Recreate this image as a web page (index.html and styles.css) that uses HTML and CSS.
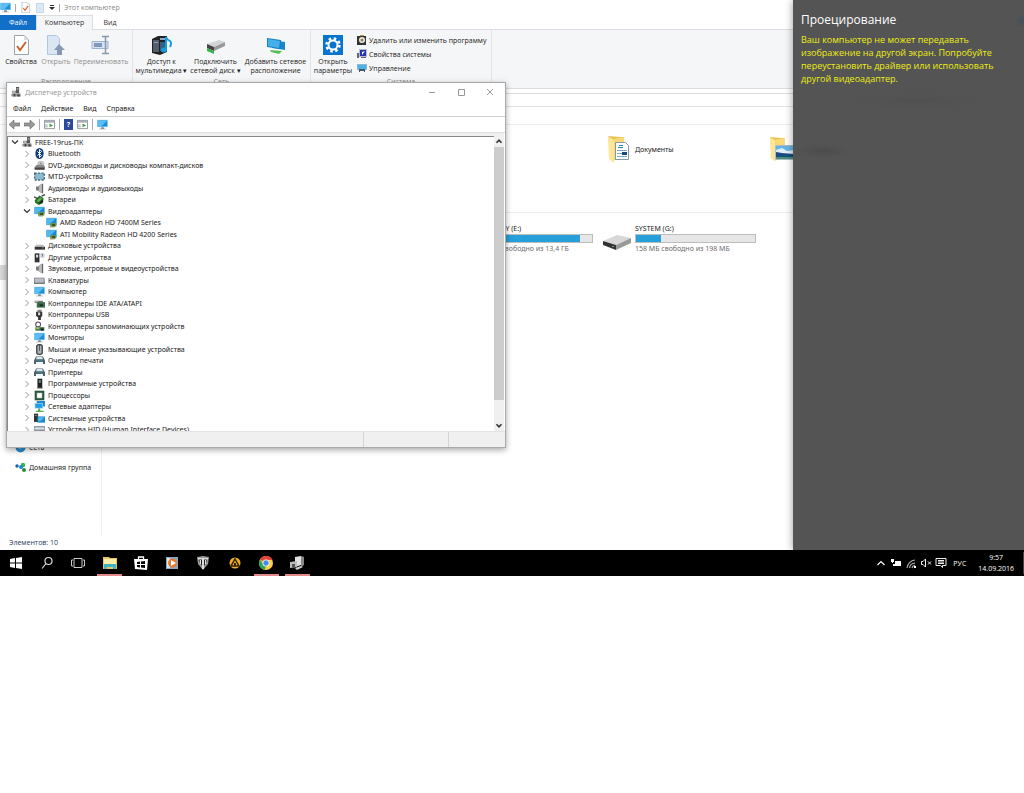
FILE: index.html
```html
<!DOCTYPE html>
<html lang="ru">
<head>
<meta charset="utf-8">
<title>Диспетчер устройств</title>
<link rel="stylesheet" href="styles.css">
</head>
<body>
<svg class="defs" aria-hidden="true">
  <defs>
    <symbol id="monitor" viewBox="0 0 16 16"><path fill="#b9dcf0" d="M0 1h16v11H0z"/><path fill="#1b8fdc" d="M1 2h14v9H1z"/><path fill="#5bbdf3" d="M1 2h14L6 11H1z"/><path fill="#7d8c97" d="M6 12h4v2h3v1H3v-1h3z"/></symbol>
    <symbol id="pc" viewBox="0 0 16 16"><path fill="#555" d="M8 0h5v10H8z"/><path fill="#bbb" d="M9 2h3v1H9zM9 4h3v1H9z"/><path fill="#777" d="M2 6h6v4H2z"/><path fill="#cfd8dd" d="M3 7h4v2H3z"/><path fill="#999" d="M0 12l3-2h12l1 5H1z"/><path fill="#444" d="M4 11h3v4H4zM10 12h4v3h-4z"/></symbol>
    <symbol id="bluetooth" viewBox="0 0 16 16"><ellipse cx="8" cy="8" rx="6" ry="8" fill="#0a3a78"/><path d="M5 5l6 6-3 3V2l3 3-6 6" fill="none" stroke="#fff" stroke-width="1.4"/></symbol>
    <symbol id="dvd" viewBox="0 0 16 16"><ellipse cx="10" cy="5" rx="5" ry="4" fill="#c4c7c9"/><path fill="#888" d="M1 10l3-3h10l2 3v4H1z"/><path fill="#444" d="M1 11h14v3H1z"/><circle cx="10" cy="5" r="1" fill="#777"/></symbol>
    <symbol id="mtd" viewBox="0 0 16 16"><path fill="#8dbad0" d="M1 3h14v10H1z"/><path d="M1 3h14v10H1z" fill="none" stroke="#3f6878" stroke-width="2" stroke-dasharray="3 2"/></symbol>
    <symbol id="speaker" viewBox="0 0 16 16"><path fill="#777" d="M3 5h3l5-4v14l-5-4H3z"/><path fill="#bbb" d="M7 5l4-4v14l-4-4z"/><path d="M12.500 1v14" stroke="#555" stroke-width="1.500"/></symbol>
    <symbol id="battery" viewBox="0 0 16 16"><path fill="#256f2b" d="M1 9l7-7 6 4-1 7-6 3-5-3z"/><path fill="#63b44c" d="M4 9l5-4 3 2-6 5z"/><path d="M0 4l6 3M11 3l5-2" stroke="#444" stroke-width="2"/><path fill="#222" d="M8 12l5-4v4l-5 3z"/></symbol>
    <symbol id="display" viewBox="0 0 16 16"><path fill="#a4cfe3" d="M0 1h16v11H0z"/><path fill="#168ad2" d="M1 2h14v9H1z"/><path fill="#50b8ee" d="M1 2h13L5 11H1z"/><path fill="#6f973d" d="M6 9h9v5H6z"/><path fill="#3d4b38" d="M9 10h4v3H9zM6 14h7v1H6z"/></symbol>
    <symbol id="disk" viewBox="0 0 16 16"><path fill="#bbb" d="M3 7h10l3 3H1z"/><path fill="#333" d="M1 10h15v4H1z"/><path fill="#8c9" d="M12 11h2v1h-2z"/></symbol>
    <symbol id="unknown" viewBox="0 0 16 16"><path fill="#333" d="M1 2h7v13H1z"/><path fill="#ddd" d="M3 4h3v4H3z"/><circle cx="12" cy="5" r="4" fill="#d8dfe3"/><path d="M11 4q0-1 1-1 2 1 0 3v1" fill="none" stroke="#557" stroke-width="1"/></symbol>
    <symbol id="keyboard" viewBox="0 0 16 16"><path fill="#777" d="M0 4h15l1 9H0z"/><path fill="#c4c9d0" d="M1 5h13v6H1z"/><path d="M1 7.500h13M1 9.500h13" stroke="#9aa0a8" stroke-dasharray="2 1"/></symbol>
    <symbol id="ide" viewBox="0 0 16 16"><path fill="#777" d="M1 4h12v3H1z"/><path fill="#3c6a4a" d="M4 6h12v8H4z"/><path fill="#1d3025" d="M8 9h5v3H8z"/><path fill="#bbb" d="M2 4h4v2H2z"/></symbol>
    <symbol id="usb" viewBox="0 0 16 16"><path fill="#888" d="M5 1h6v4H5z"/><path fill="#333" d="M3 4h9v6l-2 2v4H6v-4l-3-2z"/><path fill="#ddd" d="M6 5h3v4H6z"/></symbol>
    <symbol id="storage" viewBox="0 0 16 16"><circle cx="6" cy="5" r="3.500" fill="none" stroke="#546" stroke-width="1.500"/><path fill="#346a4d" d="M2 9h13v5H2z"/><path fill="#9bc15b" d="M3 9h5v3H3z"/><path fill="#222" d="M10 11h4v3h-4z"/></symbol>
    <symbol id="mouse" viewBox="0 0 16 16"><rect x="3" y="0" width="10" height="16" rx="4" fill="#444"/><rect x="5" y="2" width="6" height="12" rx="2" fill="#a7b4bb"/><path d="M8 2v8" stroke="#333"/></symbol>
    <symbol id="printer" viewBox="0 0 16 16"><path fill="#50606a" d="M3 2h10l3 6v5h-3v-3H3v3H0V8z"/><path fill="#d6e7ef" d="M4 3h8l1 3H3z"/><path fill="#379bb3" d="M4 8h8v1H4z"/><path fill="#eef5f7" d="M4 11h8v2H4z"/></symbol>
    <symbol id="software" viewBox="0 0 16 16"><path fill="#222" d="M5 1h7v14H5z"/><path fill="#6c8b70" d="M7 3h3v4H7z"/><path fill="#777" d="M4 14h9v1H4z"/></symbol>
    <symbol id="cpu" viewBox="0 0 16 16"><path fill="#28553c" d="M1 1h14v14H1z"/><path fill="#c4d5c5" d="M4 4h8v8H4z"/><path fill="#fff" d="M5 5h6v6H5z"/></symbol>
    <symbol id="net" viewBox="0 0 16 16"><path fill="#2588cc" d="M4 0h12v8H4z"/><path fill="#8ed3f7" d="M1 3h12v8H1z"/><path fill="#259ce4" d="M2 4h10v6H2z"/><path fill="#51a94b" d="M6 11h3v3h5v2H3v-2h3z"/></symbol>
    <symbol id="system" viewBox="0 0 16 16"><path fill="#333" d="M0 1h6v12H0z"/><path fill="#999" d="M1 3h4v1H1z"/><path fill="#168ad2" d="M5 5h11v9H5z"/><path fill="#55b8e9" d="M6 6h9l-6 6H6z"/></symbol>
    <symbol id="hid" viewBox="0 0 16 16"><path fill="#8798a4" d="M0 3h16v10H0z"/><path fill="#d8e2e8" d="M1 5h14v3H1z"/><path fill="#b77" d="M9 9h5v3H9z"/></symbol>
    <symbol id="chevron" viewBox="0 0 8 8"><path d="M2.500 1l3 3-3 3" fill="none" stroke="#999"/></symbol>
    <symbol id="open" viewBox="0 0 8 8"><path d="M1 2.500l3 3 3-3" fill="none" stroke="#333" stroke-width="1.200"/></symbol>
    <symbol id="up" viewBox="0 0 8 8"><path d="M2 5l2-2 2 2" fill="none" stroke="#333" stroke-width="1.300"/></symbol>
    <symbol id="down" viewBox="0 0 8 8"><path d="M2 3l2 2 2-2" fill="none" stroke="#333" stroke-width="1.300"/></symbol>
    <symbol id="sheet" viewBox="0 0 16 20"><path fill="#fff" stroke="#9aa4ad" d="M1.500.5h10l4 4v15h-14z"/><path fill="#ddd" d="M11 0v5h5z"/><path d="M4 11l3 4 6-8" fill="none" stroke="#d0622c" stroke-width="2"/></symbol>
    <symbol id="blanksheet" viewBox="0 0 20 20"><path fill="#dbe6f4" stroke="#b2c5dd" d="M1.500.5h9l3 3v16h-12z"/><path fill="#8798b2" d="M13 9l6 6h-3v5h-5v-5H8z"/></symbol>
    <symbol id="panelicon" viewBox="0 0 12 10"><path fill="#fff" stroke="#8a9299" d="M.5.5h11v9H.5z"/><path fill="#a8b0b6" d="M1 1h10v2H1z"/><path fill="#9aa" d="M1 5h3v1H1zM1 7h3v1H1z"/><path fill="#4a9b4c" d="M6 4l4 2-4 2z"/></symbol>
    <symbol id="folder" viewBox="0 0 24 28"><path fill="#e9c35a" d="M1 1l13 1h3v23H5z"/><path fill="#ffe596" d="M1 1l6 4v23l-5-4z"/><path fill="#fad978" d="M7 4l10-2v22H7z"/></symbol>
    <symbol id="drive" viewBox="0 0 28 16"><path fill="#d8d8d8" d="M0 7L14 1l14 3-15 7z"/><path fill="#333" d="M0 7l13 4v5L0 11z"/><path fill="#999" d="M13 11l15-7v5l-15 7z"/><path fill="#6a6" d="M9 12h2v1H9z"/></symbol>
  </defs>
</svg>

<main class="desktop">
  <div class="workspace">
    <section class="explorer" aria-label="Этот компьютер">
      <header class="ex-title">
        <svg class="i11"><use href="#monitor"/></svg><i class="bar"></i>
        <svg class="i11"><use href="#sheet"/></svg>
        <svg class="i10" viewBox="0 0 10 10"><path fill="#dce8f6" stroke="#c5d6ea" d="M1.500.5h7v9h-7z"/></svg>
        <svg class="i6" viewBox="0 0 6 6"><path fill="#333" d="M1 0h4v1H1zM0 2h6L3 5z"/></svg><i class="bar"></i>
        <span>Этот компьютер</span>
      </header>
      <nav class="tabs">
        <button class="tab file">Файл</button><button class="tab current">Компьютер</button><button class="tab">Вид</button>
      </nav>
      <div class="ribbon">
        <div class="group g-place">
          <div class="tools">
            <button class="tool w38"><svg class="i20"><use href="#sheet"/></svg><span>Свойства</span></button>
            <button class="tool w30 off"><svg class="i20"><use href="#blanksheet"/></svg><span>Открыть</span></button>
            <button class="tool w58 off"><svg class="i20" viewBox="0 0 20 20"><path fill="#d5e2f2" stroke="#9fb4d0" d="M1 6.500h16v7H1z"/><path fill="#8299bd" d="M3 8h8v4H3z"/><path d="M11 1.500h3.500v17H11M18 1.500h-3.500v17H18" fill="none" stroke="#8797ad" stroke-width="1.500"/></svg><span>Переименовать</span></button>
          </div>
          <span class="caption">Расположение</span>
        </div>
        <div class="group g-net">
          <div class="tools">
            <button class="tool w54"><svg class="i20" viewBox="0 0 20 20"><path fill="#222" d="M0 4l6-3h9v16l-7 3-8-2z"/><path fill="#53606b" d="M1 5h6v12H1z"/><path fill="#8ca9bb" d="M8 3h5v2H8zM2 7h4v1H2z"/><path fill="#345f80" d="M8 7h5v9H8z"/><path d="M14 15V2q1 3 4 4 2 2 0 6" fill="none" stroke="#169bdf" stroke-width="2"/><ellipse cx="12" cy="15" rx="3" ry="2.500" fill="#169bdf"/></svg><span>Доступ к<br>мультимедиа ▾</span></button>
            <button class="tool w50"><svg class="i20" viewBox="0 0 20 20"><path fill="#d2d5d6" d="M1 9l12-4 6 2-11 5z"/><path fill="#444" d="M1 9l7 3v4l-7-3z"/><path fill="#999" d="M8 12l11-5v4L8 16z"/><path fill="#36b449" d="M1 13l7 3v3l-7-3z"/></svg><span>Подключить<br>сетевой диск ▾</span></button>
            <button class="tool w66"><svg class="i20" viewBox="0 0 20 20"><path fill="#1a86c9" d="M6 5l13 2v8L6 13z"/><path fill="#1782c5" d="M1 3l14 2v9L1 12z"/><path fill="#45afea" d="M2 4l12 2-1 7-11-2z"/><path fill="#55bf56" d="M4 15l12 1-3 3-8-2z"/></svg><span>Добавить сетевое<br>расположение</span></button>
          </div>
          <span class="caption">Сеть</span>
        </div>
        <div class="group g-sys">
          <div class="tools">
            <button class="tool w38"><svg class="i20" viewBox="0 0 20 20"><path fill="#0874ce" d="M0 0h20v20H0z"/><circle cx="10" cy="10" r="4.500" fill="none" stroke="#fff" stroke-width="2"/><circle cx="10" cy="10" r="6.500" fill="none" stroke="#fff" stroke-width="2.500" stroke-dasharray="2.550 2.550"/></svg><span>Открыть<br>параметры</span></button>
            <div class="links">
              <button class="link"><svg class="i10" viewBox="0 0 10 10"><path fill="#333" d="M0 1h9v9H0z"/><path fill="#b9974d" d="M3 0h4v1H3z"/><circle cx="5" cy="5" r="3" fill="#eee"/><circle cx="5" cy="5" r="1.500" fill="#947a42"/></svg>Удалить или изменить программу</button>
              <button class="link"><svg class="i10" viewBox="0 0 10 10"><path fill="#b7bdd2" d="M2 0h8v8H2z"/><path fill="#2534ad" d="M3 1h6v6H3z"/><path fill="#fff" d="M5 3l3-1-3 4z"/><path fill="#667" d="M0 4h2v5H0zM4 8h5v1H4z"/></svg>Свойства системы</button>
              <button class="link"><svg class="i10" viewBox="0 0 10 10"><path fill="#8db9d0" d="M0 1h10v6H0z"/><path fill="#48b1e8" d="M1 2h8v4H1z"/><path fill="#456" d="M2 6h6v3H7V8H3v1H2z"/></svg>Управление</button>
            </div>
          </div>
          <span class="caption">Система</span>
        </div>
      </div>
      <div class="crumbs"></div>
      <div class="address"></div>
      <div class="headings"></div>
      <div class="ex-body">
        <nav class="side">
          <a class="place" href="#"><svg class="i11" viewBox="0 0 11 11"><circle cx="5.500" cy="5.500" r="5" fill="#2b8cd0"/><path fill="#a5d7ef" d="M1 4l5-3 3 3-4 3z"/></svg>Сеть</a>
          <a class="place" href="#"><svg class="i11" viewBox="0 0 11 11"><circle cx="2" cy="4" r="1.700" fill="#185fb4"/><circle cx="8" cy="3" r="2.200" fill="#38b44a"/><circle cx="6" cy="5" r="2" fill="#168ad2"/><circle cx="9" cy="8" r="2" fill="#238c3e"/></svg>Домашняя группа</a>
        </nav>
        <div class="content">
          <div class="tiles folders">
            <div class="tile c3"><svg class="thumb" viewBox="-4 0 28 28"><use href="#folder" width="24" height="28"/><path fill="#fff" stroke="#8799a5" d="M8.500 7.500h10l3 3v14h-13z"/><path fill="#258bbb" d="M12 10h4v1h-4zM11 12h5v1h-5z"/><path stroke="#7aacca" d="M10 15.500h10M10 18.500h5M10 21.500h10"/><path fill="#174b75" d="M15 17h5v3h-5z"/></svg><span>Документы</span></div>
            <div class="tile c4"><svg class="thumb" viewBox="0 0 28 28"><use href="#folder" x="3" width="22" height="28"/><path fill="#eef" stroke="#abc" d="M9.500 10.500h19v14h-19z"/><path fill="#64b5e6" d="M10 11h18v6H10z"/><path fill="#dceefa" d="M10 15l6-2 5 3 7-1v2H10z"/><path fill="#174f80" d="M10 17l6 1 12 1v3H10z"/><path fill="#4b8e79" d="M10 22h18v2H10z"/></svg></div>
          </div>
          <div class="tiles drives">
            <div class="tile c2"><svg class="thumb"><use href="#drive" y="2"/></svg><div class="info"><span>DISCOVERY (E:)</span><div class="usage"><div class="used" style="width:90%"></div></div><span class="free">11,37 ГБ свободно из 13,4 ГБ</span></div></div>
            <div class="tile c3"><svg class="thumb"><use href="#drive" y="4"/></svg><div class="info"><span>SYSTEM (G:)</span><div class="usage"><div class="used" style="width:21%"></div></div><span class="free">158 МБ свободно из 198 МБ</span></div></div>
          </div>
        </div>
      </div>
      <footer class="count">Элементов: 10</footer>
    </section>

    <section class="dialog" aria-label="Диспетчер устройств">
      <header class="dlg-title">
        <svg class="i10"><use href="#pc"/></svg><h1>Диспетчер устройств</h1>
        <button class="win" aria-label="Свернуть"><svg viewBox="0 0 8 8"><path d="M1 4.500h6" stroke="#999"/></svg></button>
        <button class="win" aria-label="Развернуть"><svg viewBox="0 0 8 8"><path d="M1.500 1.500h6v6h-6z" fill="none" stroke="#999"/></svg></button>
        <button class="win" aria-label="Закрыть"><svg viewBox="0 0 8 8"><path d="M1 1l6 6M7 1L1 7" stroke="#999"/></svg></button>
      </header>
      <nav class="menu"><button>Файл</button><button>Действие</button><button>Вид</button><button>Справка</button></nav>
      <div class="toolbar">
        <button aria-label="Назад"><svg class="i11" viewBox="0 0 11 11"><path fill="#999" stroke="#666" stroke-width=".6" d="M0 5.500L5 1v3h6v3H5v3z"/></svg></button>
        <button aria-label="Вперёд"><svg class="i11" viewBox="0 0 11 11"><path fill="#999" stroke="#666" stroke-width=".6" d="M11 5.500L6 1v3H0v3h6v3z"/></svg></button>
        <i class="rule"></i>
        <button aria-label="Дерево консоли"><svg class="i11"><use href="#panelicon"/></svg></button>
        <i class="rule"></i>
        <button class="help" aria-label="Справка">?</button>
        <button aria-label="Область действий"><svg class="i11"><use href="#panelicon"/></svg></button>
        <i class="rule"></i>
        <button aria-label="Обновить конфигурацию"><svg class="i11"><use href="#monitor"/></svg></button>
      </div>
      <div class="tree-pane">
        <ul class="tree">
          <li class="root"><svg class="tw"><use href="#open"/></svg><svg class="ic"><use href="#pc"/></svg>FREE-19rus-ПК</li>
          <li><svg class="tw"><use href="#chevron"/></svg><svg class="ic"><use href="#bluetooth"/></svg>Bluetooth</li>
          <li><svg class="tw"><use href="#chevron"/></svg><svg class="ic"><use href="#dvd"/></svg>DVD-дисководы и дисководы компакт-дисков</li>
          <li><svg class="tw"><use href="#chevron"/></svg><svg class="ic"><use href="#mtd"/></svg>MTD-устройства</li>
          <li><svg class="tw"><use href="#chevron"/></svg><svg class="ic"><use href="#speaker"/></svg>Аудиовходы и аудиовыходы</li>
          <li><svg class="tw"><use href="#chevron"/></svg><svg class="ic"><use href="#battery"/></svg>Батареи</li>
          <li><svg class="tw"><use href="#open"/></svg><svg class="ic"><use href="#display"/></svg>Видеоадаптеры</li>
          <li class="leaf"><svg class="ic"><use href="#display"/></svg>AMD Radeon HD 7400M Series</li>
          <li class="leaf"><svg class="ic"><use href="#display"/></svg>ATI Mobility Radeon HD 4200 Series</li>
          <li><svg class="tw"><use href="#chevron"/></svg><svg class="ic"><use href="#disk"/></svg>Дисковые устройства</li>
          <li><svg class="tw"><use href="#chevron"/></svg><svg class="ic"><use href="#unknown"/></svg>Другие устройства</li>
          <li><svg class="tw"><use href="#chevron"/></svg><svg class="ic"><use href="#speaker"/></svg>Звуковые, игровые и видеоустройства</li>
          <li><svg class="tw"><use href="#chevron"/></svg><svg class="ic"><use href="#keyboard"/></svg>Клавиатуры</li>
          <li><svg class="tw"><use href="#chevron"/></svg><svg class="ic"><use href="#monitor"/></svg>Компьютер</li>
          <li><svg class="tw"><use href="#chevron"/></svg><svg class="ic"><use href="#ide"/></svg>Контроллеры IDE ATA/ATAPI</li>
          <li><svg class="tw"><use href="#chevron"/></svg><svg class="ic"><use href="#usb"/></svg>Контроллеры USB</li>
          <li><svg class="tw"><use href="#chevron"/></svg><svg class="ic"><use href="#storage"/></svg>Контроллеры запоминающих устройств</li>
          <li><svg class="tw"><use href="#chevron"/></svg><svg class="ic"><use href="#monitor"/></svg>Мониторы</li>
          <li><svg class="tw"><use href="#chevron"/></svg><svg class="ic"><use href="#mouse"/></svg>Мыши и иные указывающие устройства</li>
          <li><svg class="tw"><use href="#chevron"/></svg><svg class="ic"><use href="#printer"/></svg>Очереди печати</li>
          <li><svg class="tw"><use href="#chevron"/></svg><svg class="ic"><use href="#printer"/></svg>Принтеры</li>
          <li><svg class="tw"><use href="#chevron"/></svg><svg class="ic"><use href="#software"/></svg>Программные устройства</li>
          <li><svg class="tw"><use href="#chevron"/></svg><svg class="ic"><use href="#cpu"/></svg>Процессоры</li>
          <li><svg class="tw"><use href="#chevron"/></svg><svg class="ic"><use href="#net"/></svg>Сетевые адаптеры</li>
          <li><svg class="tw"><use href="#chevron"/></svg><svg class="ic"><use href="#system"/></svg>Системные устройства</li>
          <li><svg class="tw"><use href="#chevron"/></svg><svg class="ic"><use href="#hid"/></svg>Устройства HID (Human Interface Devices)</li>
        </ul>
        <div class="scroll"><svg class="arrow"><use href="#up"/></svg><div class="thumbbar"></div><svg class="arrow"><use href="#down"/></svg></div>
      </div>
      <footer class="status"><span></span><span></span><span></span></footer>
    </section>

    <aside class="project">
      <h2>Проецирование</h2>
      <p>Ваш компьютер не может передавать изображение на другой экран. Попробуйте переустановить драйвер или использовать другой видеоадаптер.</p>
    </aside>
  </div>

  <footer class="taskbar">
    <div class="apps">
      <button aria-label="Пуск"><svg viewBox="0 0 16 16"><path fill="#fff" d="M2 4l5-1v4.500H2zM8 3l6-1v5.500H8zM2 8.500h5V13l-5-1zM8 8.500h6V14l-6-1z"/></svg></button>
      <button aria-label="Поиск"><svg viewBox="0 0 16 16"><circle cx="9.500" cy="6" r="3.500" fill="none" stroke="#ddd" stroke-width="1.200"/><path d="M7 8.500l-4 5" stroke="#ddd" stroke-width="1.200"/></svg></button>
      <button aria-label="Представление задач"><svg viewBox="0 0 16 16"><path d="M4 3.500h8v9H4zM3 5H1.500v6H3M13 5h1.500v6H13" fill="none" stroke="#ccc"/></svg></button>
      <button class="live" aria-label="Проводник"><svg viewBox="0 0 16 16"><path fill="#e9c55b" d="M1 2h6l1 1h7v11H1z"/><path fill="#fff0a8" d="M2 4h12v6H2z"/><path fill="#42b5c5" d="M2 9h12v5h-3v-2H5v2H2z"/></svg></button>
      <button aria-label="Магазин"><svg viewBox="0 0 16 16"><path d="M5.500 5V2h5v3" fill="none" stroke="#fff" stroke-width="1.300"/><path fill="#fff" d="M1 4h14l-1 11-12-1z"/><path fill="#000" d="M4 7l3-.5V9H4zM8 6.500l4-.5v3H8zM4 10h3v2.500L4 12zM8 10h4v3l-4-.5z"/></svg></button>
      <button aria-label="Проигрыватель"><svg viewBox="0 0 16 16"><path fill="#8ba9be" d="M2 2h12v12H2z"/><path fill="#d8e5ed" d="M3 3h3v10H3z"/><circle cx="8.500" cy="8" r="4.500" fill="#e77a2e"/><path fill="#fff" d="M7 5l5 3-5 3z"/></svg></button>
      <button aria-label="World of Tanks"><svg viewBox="0 0 16 16"><path fill="#999" d="M2 2l6-1 6 1-1 7-5 6-5-6z"/><path fill="#222" d="M4 4h3v7L5 8zM9 4h3l-1 4-2 3z"/><path fill="#ddd" d="M3 3h10v1.500H3zM7 3h2v11H7zM5 5h1v4H5zM10 5h1v4h-1z"/></svg></button>
      <button aria-label="AIMP"><svg viewBox="0 0 16 16"><circle cx="8" cy="8" r="5.500" fill="#efae28"/><path d="M8 4l4 7H4z" fill="none" stroke="#302000" stroke-width="1.500"/><path fill="#302000" d="M7 8h2v3H7z"/></svg></button>
      <button class="live" aria-label="Chrome"><svg viewBox="0 0 16 16"><circle cx="8" cy="8" r="7" fill="#ffd03c"/><path fill="#df4537" d="M8 8L2 4.500A7 7 0 0 1 14.500 5H8z"/><path fill="#2fa35a" d="M2 4.500L6 10l2 1-1.500 4A7 7 0 0 1 2 4.500z"/><circle cx="8" cy="8" r="3.500" fill="#fff"/><circle cx="8" cy="8" r="2.700" fill="#438cf0"/></svg></button>
      <button class="live" aria-label="Диспетчер устройств"><svg viewBox="0 0 16 16"><path fill="#e1e1e1" d="M6 2l6-1v9l-6 2z"/><path fill="#888" d="M12 1l3 1v8l-3 2z"/><path fill="#bbb" d="M1 7l7-1v6l-7 1z"/><path fill="#555" d="M3 9h3v3H3z"/><path fill="#ccc" d="M6 13l6-2 2 1-6 3z"/></svg></button>
    </div>
    <div class="tray">
      <svg viewBox="0 0 12 12"><path d="M2.500 8L6 4.500 9.500 8" fill="none" stroke="#fff" stroke-width="1.200"/></svg>
      <svg viewBox="0 0 12 12"><path fill="#fff" d="M1 2h3v3H3v1H2V5H1zM5 4h6v5H3V7h2z"/></svg>
      <svg viewBox="0 0 12 12"><path d="M2 11A9 9 0 0 1 10 3M4.500 11A6 6 0 0 1 10 6M7 11a4 4 0 0 1 3-3" fill="none" stroke="#aaa" stroke-width="1.200"/><path fill="#fff" d="M9 9h2v2H9z"/></svg>
      <svg viewBox="0 0 12 12"><path d="M1.500 4.500h1.500L5.500 2v8L3 7.500H1.500zM8 4.500l3 3M11 4.500l-3 3" fill="none" stroke="#eee"/></svg>
      <svg viewBox="0 0 12 12"><path d="M1 1.500h10v7H7.500v2l-2-2H1zM3 3.500h6M3 5h6M3 6.500h6" fill="none" stroke="#eee"/></svg>
      <span class="lang">РУС</span>
      <time class="clock">9:57<br>14.09.2016</time>
    </div>
  </footer>
</main>
</body>
</html>
```
FILE: styles.css
```css
* { box-sizing: border-box; }
body { margin: 0; background: #fff; color: #1a1a1a; font: 7px/9px "Open Sans", "Noto Sans", sans-serif; }
button { border: 0; padding: 0; margin: 0; background: none; color: inherit; font: inherit; }
svg { display: block; flex: none; }
h1, h2, p, ul { margin: 0; padding: 0; font-weight: 400; }
.defs { position: absolute; width: 0; height: 0; }

.i6 { width: 6px; height: 6px; }
.i10 { width: 10px; height: 10px; }
.i11 { width: 11px; height: 11px; }
.i20 { width: 20px; height: 20px; }

.workspace { position: relative; display: flex; overflow: hidden; }

/* Explorer window */
.explorer { flex: 1; display: flex; flex-direction: column; min-width: 0; }
.ex-title { display: flex; align-items: center; gap: 4px; height: 15px; color: #888; }
.bar { width: 1px; height: 8px; background: #aaa; }
.tabs { display: flex; height: 15px; border-bottom: 1px solid #dcdde0; }
.tab { width: 34px; height: 15px; color: #333; }
.tab.file { width: 36px; background: #116fc7; color: #fff; }
.tab.current { width: 57px; background: #f5f6f7; border: solid #dcdde0; border-width: 0 1px; box-shadow: inset 0 1px #dcdde0; }
.ribbon { display: flex; height: 59px; background: #f5f6f7; border-bottom: 1px solid #dcdde0; }
.group { display: flex; flex-direction: column; justify-content: space-between; padding-top: 5px; border-right: 1px solid #e2e3e5; }
.g-place { width: 133px; }
.g-net { width: 178px; }
.g-sys { width: 181px; }
.tools { display: flex; justify-content: center; gap: 2px; }
.g-place .tools { justify-content: flex-start; padding-left: 2px; gap: 1px; }
.tool { display: flex; flex-direction: column; align-items: center; gap: 2px; line-height: 9px; white-space: nowrap; }
.tool.off { color: #8e8e8e; }
.w30 { width: 30px; }
.w38 { width: 38px; }
.w50 { width: 50px; }
.w54 { width: 54px; }
.w58 { width: 58px; }
.w66 { width: 66px; }
.links { display: flex; flex-direction: column; gap: 4px; flex: 1; }
.link { display: flex; align-items: center; gap: 2px; height: 10px; white-space: nowrap; }
.g-sys .tools { justify-content: flex-start; padding-left: 3px; gap: 5px; }
.caption { padding-bottom: 2px; text-align: center; color: #888; }
.crumbs { height: 5px; border-bottom: 1px solid #dcdde4; }
.address { height: 13px; border-bottom: 1px solid #e2e3e8; }
.headings { height: 18px; border-bottom: 1px solid #ebecf0; }
.ex-body { display: flex; min-height: 410px; font-family: "Noto Sans", "Open Sans", sans-serif; }
.side { width: 102px; display: flex; flex-direction: column; justify-content: flex-end; padding: 0 0 58px 15px; border-right: 1px solid #f0f0f0; background: linear-gradient(#d9d9d9, #d9d9d9) 0 140px / 100% 15px no-repeat; }
.place { display: flex; align-items: center; gap: 3px; height: 20px; color: inherit; text-decoration: none; white-space: nowrap; }
.content { flex: 1; }
.tiles { display: grid; grid-template-columns: repeat(5, 163px); padding-left: 12px; }
.folders { height: 88px; padding-top: 10px; border-bottom: 1px solid #ececf0; }
.drives { padding-top: 11px; }
.tile { display: flex; align-items: center; gap: 4px; height: 28px; min-width: 0; }
.c2 { grid-column: 3; }
.c3 { grid-column: 4; }
.c4 { grid-column: 5; }
.thumb { width: 28px; height: 28px; }
.info { display: flex; flex-direction: column; gap: 1px; width: 121px; white-space: nowrap; }
.usage { height: 9px; border: 1px solid #bcbcbc; background: #e6e6e6; }
.used { height: 7px; background: #26a0da; }
.free { color: #6d6d6d; }
.count { height: 15px; padding: 3px 9px; color: #1e395b; }

/* Device manager window */
.dialog { position: absolute; left: 6px; top: 82px; width: 500px; background: #fff; border: 1px solid #a9a9a9; box-shadow: 0 2px 6px rgba(0, 0, 0, .35); font-family: "Noto Sans", "Open Sans", sans-serif; }
.dlg-title { display: flex; align-items: center; height: 18px; padding: 0 1px 0 4px; color: #999; }
.dlg-title h1 { flex: 1; padding-left: 4px; font-size: 7px; line-height: 9px; }
.win { width: 29px; display: flex; justify-content: center; }
.win svg { width: 8px; height: 8px; }
.menu { display: flex; gap: 10px; height: 16px; padding-left: 6px; border-bottom: 1px solid #d0d0d0; }
.toolbar { display: flex; align-items: center; gap: 4px; height: 16px; padding-left: 2px; border-bottom: 1px solid #ddd; }
.rule { width: 1px; height: 11px; background: #aaa; }
.help { width: 9px; height: 11px; background: #2a4a9e; color: #fff; font-weight: 700; }
.tree-pane { display: flex; height: 298px; margin-right: 1px; border-top: 3px solid #f0f0f0; box-shadow: inset 0 1px #888, inset 1px 0 #888; }
.tree { flex: 1; display: grid; grid-auto-rows: 12px 11px; overflow: hidden; list-style: none; }
.tree li { display: flex; align-items: center; gap: 3px; padding-left: 16px; white-space: nowrap; }
.tree .root { padding-left: 4px; }
.tree .leaf { padding-left: 39px; }
.tw { width: 8px; height: 8px; }
.ic { width: 11px; height: 11px; }
.tree .root .ic { width: 10px; height: 10px; }
.scroll { width: 10px; display: flex; flex-direction: column; align-items: stretch; background: #f0f0f0; }
.arrow { width: 10px; height: 11px; }
.thumbbar { height: 253px; margin-bottom: auto; background: #cdcdcd; }
.status { display: flex; height: 16px; background: #f0f0f0; border-top: 1px solid #e4e4e4; }
.status span { width: 57px; border-left: 1px solid #d4d4d4; }
.status span:first-child { flex: 1; border: 0; }
.status span:nth-child(2) { width: 85px; }

/* Projection panel */
.project {
  position: absolute; inset: 0 0 0 auto; width: 231px; padding: 12px 24px 0 8px;
  background:
    radial-gradient(closest-side, #44505c, #545454) 222px 14px / 14px 14px no-repeat,
    radial-gradient(closest-side, #505050, #545454) 60px 94px / 130px 14px no-repeat,
    radial-gradient(closest-side, #4c4c4c, #545454) 0 144px / 58px 14px no-repeat,
    #545454;
  box-shadow: 0 0 8px rgba(0, 0, 0, .4);
}
.project h2 { color: #fff; font-size: 12px; line-height: 16px; }
.project p { margin-top: 5px; color: #eeee14; font-size: 9px; line-height: 13px; }

/* Taskbar */
.taskbar { display: flex; justify-content: space-between; height: 26px; background: #000; color: #fff; }
.apps { display: flex; width: 313px; }
.apps button { flex: 1; display: flex; justify-content: center; align-items: center; }
.apps svg { width: 16px; height: 16px; }
.apps .live { background: linear-gradient(#e08a8a, #e08a8a) center bottom / 25px 2px no-repeat; }
.tray { display: flex; align-items: center; gap: 3px; }
.tray svg { width: 12px; height: 12px; }
.lang { padding-left: 3px; }
.clock { padding: 0 9px 0 9px; line-height: 11px; text-align: center; border-right: 1px solid #444; }
```
